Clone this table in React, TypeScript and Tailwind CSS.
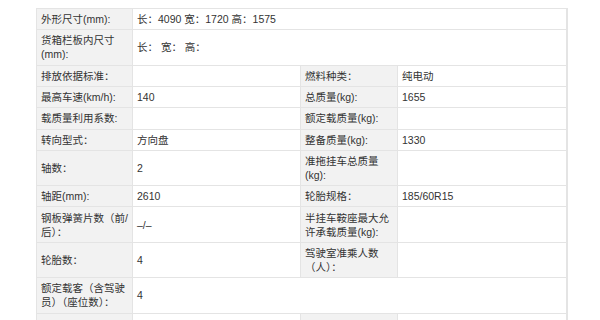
import React from "react";

const L = "bg-[#f2f2f2] border border-[#e4e4e4] px-[4px] py-[3.1px] align-middle text-left font-normal";
const V = "bg-white border border-[#e4e4e4] px-[4px] py-[3.1px] align-middle text-left";

type Row = [string, string, string?, string?] | [string, string, "span"];

const rows: Row[] = [
  ["外形尺寸(mm):", "长：4090 宽：1720 高：1575", "span"],
  ["货箱栏板内尺寸(mm):", "长：  宽：  高：", "span"],
  ["排放依据标准：", "", "燃料种类：", "纯电动"],
  ["最高车速(km/h):", "140", "总质量(kg):", "1655"],
  ["载质量利用系数:", "", "额定载质量(kg):", ""],
  ["转向型式：", "方向盘", "整备质量(kg):", "1330"],
  ["轴数：", "2", "准拖挂车总质量(kg):", ""],
  ["轴距(mm):", "2610", "轮胎规格：", "185/60R15"],
  ["钢板弹簧片数（前/后）：", "–/–", "半挂车鞍座最大允许承载质量(kg):", ""],
  ["轮胎数：", "4", "驾驶室准乘人数（人）：", ""],
  ["额定载客（含驾驶员）（座位数）：", "4", "span"],
  ["\u00a0", "", "\u00a0", ""],
];

export default function App() {
  return (
    <div
      className="w-[600px] h-[320px] overflow-hidden bg-white pt-[8px] pl-[36px] text-[10.5px] leading-[14.1px] text-[#333333]"
      style={{ fontFamily: '"Liberation Sans", "Noto Sans CJK SC", sans-serif' }}
    >
      <table className="w-[530px] table-fixed border-collapse border-r-2 border-r-[#e4e4e4]">
        <colgroup>
          <col className="w-[96px]" />
          <col className="w-[168px]" />
          <col className="w-[97px]" />
          <col className="w-[169px]" />
        </colgroup>
        <tbody>
          {rows.map((r, i) => (
            <tr key={i}>
              <th className={L}>{r[0]}</th>
              {r[2] === "span" ? (
                <td className={V} colSpan={3}>
                  {r[1]}
                </td>
              ) : (
                <>
                  <td className={V}>{r[1]}</td>
                  <th className={L}>{r[2]}</th>
                  <td className={V}>{r[3]}</td>
                </>
              )}
            </tr>
          ))}
        </tbody>
      </table>
    </div>
  );
}
